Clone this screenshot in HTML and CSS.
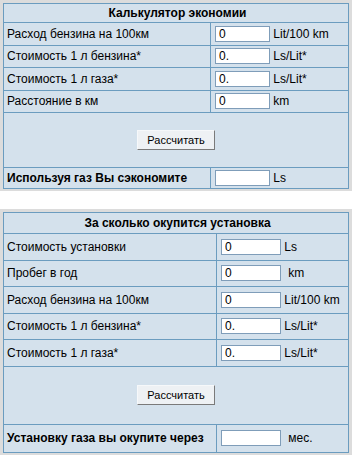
FILE: index.html
```html
<!DOCTYPE html>
<html>
<head>
<meta charset="utf-8">
<link rel="stylesheet" href="styles.css">
</head>
<body>
<div class="frame frame-one">
<table class="calc calc-one">
<tr class="r-head"><th colspan="2">Калькулятор экономии</th></tr>
<tr class="r-row"><td class="lbl">Расход бензина на 100км</td><td class="val"><input class="inp" type="text" value="0"> <span class="unit">Lit/100 km</span></td></tr>
<tr class="r-row"><td class="lbl">Стоимость 1 л бензина*</td><td class="val"><input class="inp" type="text" value="0."> <span class="unit">Ls/Lit*</span></td></tr>
<tr class="r-row"><td class="lbl">Стоимость 1 л газа*</td><td class="val"><input class="inp" type="text" value="0."> <span class="unit">Ls/Lit*</span></td></tr>
<tr class="r-row"><td class="lbl">Расстояние в км</td><td class="val"><input class="inp" type="text" value="0"> <span class="unit">km</span></td></tr>
<tr class="r-btn"><td colspan="2" class="btn-cell"><button class="btn" type="button">Рассчитать</button></td></tr>
<tr class="r-res"><td class="lbl strong">Используя газ Вы сэкономите</td><td class="val"><input class="inp" type="text" value=""> <span class="unit">Ls</span></td></tr>
</table>
</div>
<div class="frame frame-two">
<table class="calc calc-two">
<tr class="r-head"><th colspan="2">За сколько окупится установка</th></tr>
<tr class="r-row"><td class="lbl">Стоимость установки</td><td class="val"><input class="inp" type="text" value="0"> <span class="unit">Ls</span></td></tr>
<tr class="r-row"><td class="lbl">Пробег в год</td><td class="val"><input class="inp" type="text" value="0"> <span class="unit wide">km</span></td></tr>
<tr class="r-row"><td class="lbl">Расход бензина на 100км</td><td class="val"><input class="inp" type="text" value="0"> <span class="unit">Lit/100 km</span></td></tr>
<tr class="r-row"><td class="lbl">Стоимость 1 л бензина*</td><td class="val"><input class="inp" type="text" value="0."> <span class="unit">Ls/Lit*</span></td></tr>
<tr class="r-row"><td class="lbl">Стоимость 1 л газа*</td><td class="val"><input class="inp" type="text" value="0."> <span class="unit">Ls/Lit*</span></td></tr>
<tr class="r-btn"><td colspan="2" class="btn-cell"><button class="btn" type="button">Рассчитать</button></td></tr>
<tr class="r-res"><td class="lbl strong">Установку газа вы окупите через</td><td class="val"><input class="inp" type="text" value=""> <span class="unit wide">мес.</span></td></tr>
</table>
</div>
</body>
</html>
```
FILE: styles.css
```css
html, body {
  margin: 0;
  padding: 0;
  background: #ffffff;
}
body {
  font-family: "Liberation Sans", Arial, sans-serif;
  font-size: 12px;
  color: #000;
}
.frame {
  width: 352px;
  box-sizing: border-box;
  background: #dcdcdc;
  padding: 3px 3px 2px 3px;
}
.frame-two {
  margin-top: 18px;
  padding-top: 3px;
}
.calc {
  width: 346px;
  border-collapse: collapse;
  background: #d4e1ec;
}
.calc th, .calc td {
  border: 1px solid #6b9cbf;
  padding: 0 0 0 3px;
  vertical-align: middle;
  white-space: nowrap;
}
.calc th {
  font-weight: bold;
  text-align: center;
}
.calc-one .lbl { width: 203px; }
.calc-two .lbl { width: 209px; }
.strong { font-weight: bold; }
.val { padding-left: 4px !important; }
.calc-one .r-head { height: 19px; }
.calc-one .r-row { height: 22.5px; }
.calc-one .r-btn { height: 55px; }
.calc-one .r-res { height: 21px; }
.calc-two .r-head { height: 21px; }
.calc-two .r-row { height: 26.5px; }
.calc-two .r-btn { height: 58px; }
.calc-two .r-res { height: 28px; }
.inp {
  box-sizing: border-box;
  height: 16px;
  border: 1px solid #7f9db9;
  background: #fff;
  font-family: "Liberation Sans", Arial, sans-serif;
  font-size: 12px;
  padding: 0 3px;
  margin: 0;
  vertical-align: middle;
}
.calc-one .inp { width: 55px; }
.calc-two .inp { width: 60px; }
.unit { vertical-align: middle; }
.wide { margin-left: 4px; }
.btn-cell {
  text-align: center;
  padding: 0 !important;
}
.btn {
  font-family: "Liberation Sans", Arial, sans-serif;
  font-size: 11px;
  height: 20px;
  padding: 0 9px;
  background: #eef1f4;
  border: 1px solid;
  border-color: #f6f8fa #7a7a7a #7a7a7a #f6f8fa;
  color: #000;
}
```
